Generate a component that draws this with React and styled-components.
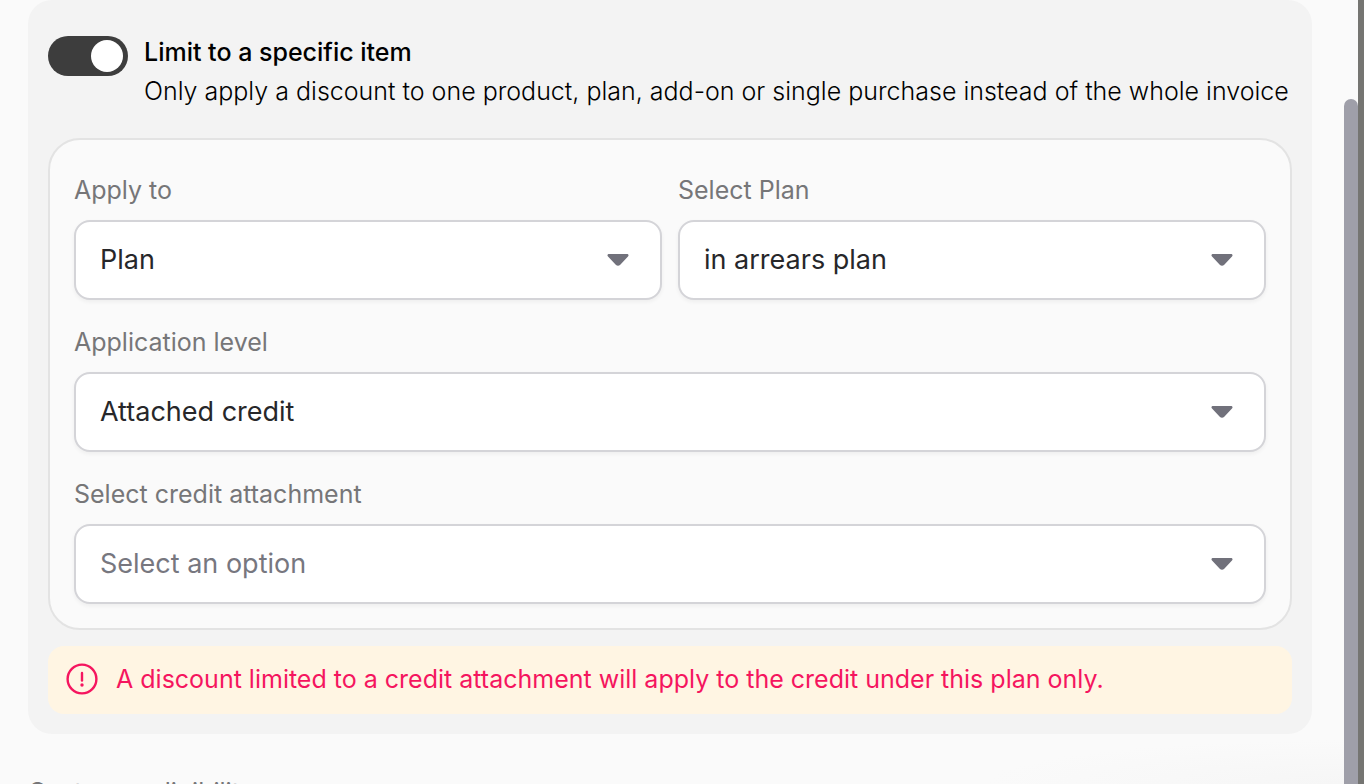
import React, { useState } from 'react';
import styled, { createGlobalStyle } from 'styled-components';

const GlobalStyle = createGlobalStyle`
  * {
    box-sizing: border-box;
  }

  body {
    margin: 0;
    overflow: hidden;
    background: #757572;
    font-family: Inter, 'Open Sans', sans-serif;
    font-size: 25px;
  }
`;
const Page = styled.div`
  display: flex;
  height: 100vh;
  padding-right: 6px;
  overflow: hidden;
`;
const Drawer = styled.main`
  flex: 1;
  min-width: 0;
  padding: 0 32px 0 28px;
  overflow: hidden;
  background: radial-gradient(360px 44px at bottom right, #f6f6f6, #fafafa);
`;
const ScrollTrack = styled.div`
  width: 14px;
  padding-top: 99px;
  background: #fafafa;
`;
const ScrollThumb = styled.div`
  height: 100%;
  border-radius: 7px 7px 0 0;
  background: #9f9fa9;
`;
const Panel = styled.section`
  padding: 32px 20px 20px;
  border-radius: 24px;
  background: #f3f3f3;
`;
const ToggleRow = styled.div`
  display: flex;
  gap: 16px;
  margin-bottom: 28px;
`;
const Toggle = styled.input`
  appearance: none;
  flex: none;
  display: flex;
  align-items: center;
  width: 80px;
  height: 40px;
  margin: 4px 0 0;
  padding: 0 5px;
  border-radius: 20px;
  background: #b5b5b8;
  cursor: pointer;

  &::before {
    content: '';
    width: 32px;
    height: 32px;
    border-radius: 50%;
    background: #fff;
  }

  &:checked {
    justify-content: flex-end;
    background: #3d3d3d;
  }
`;
const ToggleText = styled.div`
  min-width: 0;
  color: #000;
`;
const ToggleTitle = styled.label`
  display: block;
  font-weight: 500;
  line-height: 40px;
`;
const ToggleDescription = styled.div`
  font-weight: 300;
  line-height: 38px;
  white-space: nowrap;
`;
const Fields = styled.div`
  display: grid;
  grid-template-columns: 1fr 1fr;
  gap: 20px 16px;
  padding: 28px 24px 24px;
  border: 2px solid #e3e3e3;
  border-radius: 32px;
  background: #fafafa;
`;
const FieldBox = styled.div`
  grid-column: ${(props) => (props.$wide ? '1 / -1' : 'auto')};
`;
const Label = styled.label`
  display: block;
  margin-bottom: 8px;
  color: #767678;
  line-height: 44px;
`;
const SelectWrap = styled.div`
  display: grid;
  align-items: center;

  > * {
    grid-area: 1 / 1;
  }
`;
const Select = styled.select`
  appearance: none;
  width: 100%;
  height: 80px;
  padding: 0 72px 2px 24px;
  border: 2px solid #d4d4d8;
  border-radius: 16px;
  background: #fff;
  box-shadow: 0 2px 4px rgba(0, 0, 0, 0.05);
  color: ${(props) => (props.value ? '#27272a' : '#77777f')};
  font-family: inherit;
  font-size: 27px;
`;
const Arrow = styled.svg`
  justify-self: end;
  width: 22px;
  height: 14px;
  margin-right: 33px;
  pointer-events: none;
`;
const Notice = styled.div`
  display: flex;
  align-items: center;
  gap: 18px;
  margin-top: 16px;
  padding: 12px 18px 14px;
  border-radius: 16px;
  background: #fff5e3;
  color: #f5155f;
  line-height: 42px;
`;
const NoticeIcon = styled.svg`
  flex: none;
  width: 32px;
  height: 32px;
`;
const NextHeading = styled.div`
  margin-top: 36px;
  color: #767678;
  line-height: 44px;
`;

function Field({ id, label, options, placeholder, initial = '', wide }) {
  const [value, setValue] = useState(initial);

  return (
    <FieldBox $wide={wide}>
      <Label htmlFor={id}>{label}</Label>
      <SelectWrap>
        <Select id={id} value={value} onChange={(e) => setValue(e.target.value)}>
          {placeholder && <option value=''>{placeholder}</option>}
          {options.map((option) => (
            <option key={option} value={option}>{option}</option>
          ))}
        </Select>
        <Arrow viewBox='0 0 22 14' aria-hidden='true'>
          <path d='M2 1h18c1.500 0 2.100 1.500 1 2.600l-8 8.400c-1.200 1.100-2.800 1.100-4 0l-8-8.400C-.1 2.500.5 1 2 1z' fill='#71717b' />
        </Arrow>
      </SelectWrap>
    </FieldBox>
  );
}

export default function App() {
  const [limited, setLimited] = useState(true);

  return (
    <Page>
      <GlobalStyle />
      <Drawer>
        <Panel>
          <ToggleRow>
            <Toggle
              id='limit-item'
              type='checkbox'
              role='switch'
              checked={limited}
              onChange={(e) => setLimited(e.target.checked)}
            />
            <ToggleText>
              <ToggleTitle htmlFor='limit-item'>Limit to a specific item</ToggleTitle>
              <ToggleDescription>
                Only apply a discount to one product, plan, add-on or single purchase instead of the whole invoice
              </ToggleDescription>
            </ToggleText>
          </ToggleRow>
          <Fields>
            <Field id='apply-to' label='Apply to' options={['Plan']} initial='Plan' />
            <Field id='plan' label='Select Plan' options={['in arrears plan']} initial='in arrears plan' />
            <Field id='level' label='Application level' options={['Attached credit']} initial='Attached credit' wide />
            <Field id='credit' label='Select credit attachment' options={[]} placeholder='Select an option' wide />
          </Fields>
          <Notice role='alert'>
            <NoticeIcon viewBox='0 0 32 32' fill='none' aria-hidden='true'>
              <circle cx='16' cy='16' r='14.400' stroke='currentColor' strokeWidth='2.400' />
              <path d='M16 10v7.500' stroke='currentColor' strokeWidth='2.400' strokeLinecap='round' />
              <circle cx='16' cy='22' r='1.700' fill='currentColor' />
            </NoticeIcon>
            <span>A discount limited to a credit attachment will apply to the credit under this plan only.</span>
          </Notice>
        </Panel>
        <NextHeading>Customer eligibility</NextHeading>
      </Drawer>
      <ScrollTrack>
        <ScrollThumb />
      </ScrollTrack>
    </Page>
  );
}
